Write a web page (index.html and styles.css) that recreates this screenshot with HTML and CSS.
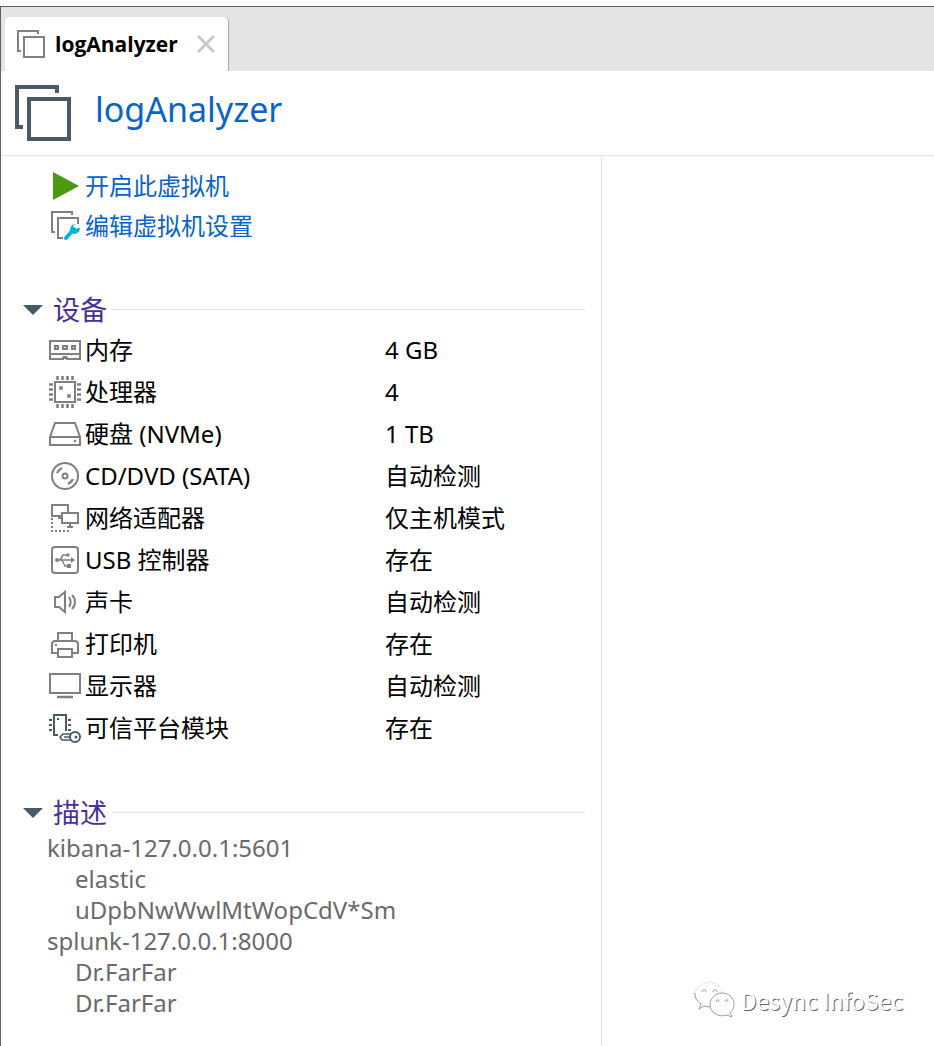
FILE: index.html
```
<!DOCTYPE html>
<html lang="zh-CN">
<head>
    <meta charset="UTF-8">
    <meta name="viewport" content="width=device-width, initial-scale=1.0">
    <title>logAnalyzer</title>
    <link rel="stylesheet" href="styles.css">
</head>
<body>
    <div class="window">
        <div class="tab-bar">
            <div class="tab">
                <svg class="tab-icon" width="28" height="28" viewBox="0 0 28 28" fill="none" stroke="#808080" stroke-width="2">
                    <path d="M21 4V1H1v20h3"/>
                    <rect x="7" y="7" width="20" height="20"/>
                </svg>
                <span class="tab-title">logAnalyzer</span>
                <button class="tab-close" aria-label="关闭">
                    <svg width="18" height="18" viewBox="0 0 18 18" fill="none" stroke="#c8c8c8" stroke-width="3">
                        <path d="M1 1l16 16M17 1L1 17"/>
                    </svg>
                </button>
            </div>
        </div>

        <header class="header">
            <svg width="56" height="56" viewBox="0 0 56 56" fill="none" stroke="#485a66" stroke-width="4">
                <path d="M42 8V2H2v40h6"/>
                <rect x="14" y="14" width="40" height="40"/>
            </svg>
            <h1>logAnalyzer</h1>
        </header>

        <div class="content">
            <main class="summary">
                <nav class="actions">
                    <a href="#" class="action">
                        <svg width="32" height="32" viewBox="0 0 32 32"><path d="M4 2l26 14L4 30z" fill="#4a990f"/></svg>
                        <span>开启此虚拟机</span>
                    </a>
                    <a href="#" class="action">
                        <svg width="32" height="32" viewBox="0 0 32 32" fill="none" stroke="#808080" stroke-width="2">
                            <path d="M23 5V2H3v20h3M29 14V8H9v20h5"/>
                            <path d="M17 28l8-9" stroke="#00b4d8" stroke-width="4" stroke-linecap="round"/>
                            <path d="M27 14l-4 1-2 4 1 4 4 1 4-2 1-4-2 0-3 2-2-2 0-2z" fill="#00b4d8" stroke="none"/>
                        </svg>
                        <span>编辑虚拟机设置</span>
                    </a>
                </nav>

                <section class="section">
                    <h2>
                        <button class="toggle" aria-expanded="true">
                            <svg width="20" height="10" viewBox="0 0 20 10"><path d="M0 0h20L10 10z" fill="#485a66"/></svg>
                            <span>设备</span>
                        </button>
                    </h2>
                    <table class="devices">
                        <tr>
                            <th scope="row"><span class="device">
                                <svg class="icon" viewBox="0 0 32 32">
                                    <path d="M1 7h30v18H1zM1 20h30"/>
                                    <path d="M6 12h3v3H6zM14 12h4v3h-4zM23 12h3v3h-3z"/>
                                    <path class="dot" d="M12 26l2-4h4l2 4z"/>
                                    <path d="M15 26h2" stroke="#fff"/>
                                </svg>内存</span></th>
                            <td>4 GB</td>
                        </tr>
                        <tr>
                            <th scope="row"><span class="device">
                                <svg class="icon" viewBox="0 0 32 32">
                                    <rect x="6" y="6" width="20" height="20"/>
                                    <path d="M8.500 0v4M13.500 0v4M18.500 0v4M23.500 0v4M8.500 28v4M13.500 28v4M18.500 28v4M23.500 28v4M0 8.500h4M0 13.500h4M0 18.500h4M0 23.500h4M28 8.500h4M28 13.500h4M28 18.500h4M28 23.500h4" stroke-width="2.600"/>
                                    <circle class="dot" cx="12" cy="12" r="2"/>
                                    <circle class="dot" cx="20" cy="20" r="2"/>
                                </svg>处理器</span></th>
                            <td>4</td>
                        </tr>
                        <tr>
                            <th scope="row"><span class="device">
                                <svg class="icon" viewBox="0 0 32 32">
                                    <path d="M1 19L6 5h20l5 14v8H1zM1 19h30"/>
                                    <circle class="dot" cx="26" cy="23" r="1.3"/>
                                </svg>硬盘 (NVMe)</span></th>
                            <td>1 TB</td>
                        </tr>
                        <tr>
                            <th scope="row"><span class="device">
                                <svg class="icon" viewBox="0 0 32 32">
                                    <circle cx="16" cy="16" r="13"/>
                                    <circle cx="16" cy="16" r="2.5"/>
                                    <path d="M8 13c1-2 3-4 5-5M24 19c-1 2-3 4-5 5" stroke-width="2.500"/>
                                </svg>CD/DVD (SATA)</span></th>
                            <td>自动检测</td>
                        </tr>
                        <tr>
                            <th scope="row"><span class="device">
                                <svg class="icon" viewBox="0 0 32 32">
                                    <path d="M12 14H3V3h16v7M9 16h4M11 14v2M13 11h16v10H13zM21 21v4M18 25h6"/>
                                    <path d="M3 16v14M6 29h16" stroke-dasharray="2 2"/>
                                </svg>网络适配器</span></th>
                            <td>仅主机模式</td>
                        </tr>
                        <tr>
                            <th scope="row"><span class="device">
                                <svg class="icon" viewBox="0 0 32 32">
                                    <rect x="3" y="3" width="26" height="26" rx="3"/>
                                    <path d="M7 16h16M11 16l3-5h4M13 16l3 6h3" stroke-width="1.5"/>
                                    <circle class="dot" cx="8" cy="16" r="2"/>
                                    <circle class="dot" cx="19" cy="11" r="1.7"/>
                                    <path class="dot" d="M22 13l4 3-4 3zM18 20h4v4h-4z"/>
                                </svg>USB 控制器</span></th>
                            <td>存在</td>
                        </tr>
                        <tr>
                            <th scope="row"><span class="device">
                                <svg class="icon" viewBox="0 0 32 32">
                                    <path d="M6 11h4l6-5v20l-6-5H6z"/>
                                    <path d="M20 11c2 3 2 7 0 10M23 9c4 4 4 10 0 14"/>
                                </svg>声卡</span></th>
                            <td>自动检测</td>
                        </tr>
                        <tr>
                            <th scope="row"><span class="device">
                                <svg class="icon" viewBox="0 0 32 32">
                                    <path d="M9 13V5h14v8M9 25H3V15l2-2h22l2 2v10h-6M9 21h14v8H9z"/>
                                    <path class="dot" d="M6 16h2v2H6z"/>
                                </svg>打印机</span></th>
                            <td>存在</td>
                        </tr>
                        <tr>
                            <th scope="row"><span class="device">
                                <svg class="icon" viewBox="0 0 32 32">
                                    <rect x="1" y="4" width="30" height="19"/>
                                    <path d="M8 27h16" stroke-width="2.500"/>
                                </svg>显示器</span></th>
                            <td>自动检测</td>
                        </tr>
                        <tr>
                            <th scope="row"><span class="device">
                                <svg class="icon icon-dark" viewBox="0 0 32 32">
                                    <path d="M9 23H5V3h12v16"/>
                                    <path d="M0 8h3M0 13h3M0 18h3M19 8h3M19 13h3M19 18h3"/>
                                    <path class="dot" d="M8 6h2v2H8z"/>
                                    <path d="M21 22h-7l-3 3 2 3h8M15 25h5" stroke-width="1.600"/>
                                    <circle cx="26" cy="25" r="5"/>
                                    <circle class="dot" cx="27" cy="25" r="1.500"/>
                                </svg>可信平台模块</span></th>
                            <td>存在</td>
                        </tr>
                    </table>
                </section>

                <section class="section">
                    <h2>
                        <button class="toggle" aria-expanded="true">
                            <svg width="20" height="10" viewBox="0 0 20 10"><path d="M0 0h20L10 10z" fill="#485a66"/></svg>
                            <span>描述</span>
                        </button>
                    </h2>
                    <div class="description">
                        <p>kibana-127.0.0.1:5601</p>
                        <p class="indent">elastic</p>
                        <p class="indent">uDpbNwWwlMtWopCdV*Sm</p>
                        <p>splunk-127.0.0.1:8000</p>
                        <p class="indent">Dr.FarFar</p>
                        <p class="indent">Dr.FarFar</p>
                    </div>
                </section>
            </main>
        </div>
    </div>

    <div class="watermark">
        <svg width="42" height="36" viewBox="0 0 42 36" fill="#fff" stroke="#777" stroke-width="0.7">
            <path d="M5 22C-2 15 0 5 9 2c9-4 19 1 20 9" stroke="#ddd"/>
            <path d="M1 11c0 5 2 8 6 11l-2 5 5-3 6 1" fill="none"/>
            <path d="M36 31l2 4-5-2C24 36 16 30 16 23c0-7 6-12 12-12 7 0 12 5 12 11 0 4-1 6-4 9z"/>
            <path d="M8 10c0-3 4-3 4 0M19 10c0-3 4-3 4 0M22 20c0-3 3-3 3 0M31 20c0-3 3-3 3 0" fill="none"/>
        </svg>
        <span>Desync InfoSec</span>
    </div>
</body>
</html>
```
FILE: styles.css
```
* {
    box-sizing: border-box;
}
body {
    margin: 0;
    padding-top: 6px;
    min-height: 100vh;
    display: flex;
    flex-direction: column;
    position: relative;
    background-color: #fff;
    color: #000;
    font-family: "Noto Sans", "Noto Sans CJK SC", sans-serif;
    font-size: 24px;
}
h1, h2, p {
    margin: 0;
    font-weight: normal;
}
button {
    border: none;
    padding: 0;
    background: none;
    font: inherit;
    color: inherit;
    cursor: pointer;
}
svg {
    display: block;
    flex: none;
}
.window {
    flex: 1;
    display: flex;
    flex-direction: column;
    border-top: 1px solid #606060;
    border-left: 1px solid #606060;
}

/* tabs */
.tab-bar {
    display: flex;
    padding: 10px 4px 0;
    background-color: #e3e4e6;
}
.tab {
    display: flex;
    align-items: center;
    height: 54px;
    padding: 0 13px 0 12px;
    border-right: 1px solid #a8a8a8;
    border-radius: 5px 5px 0 0;
    background-color: #fff;
}
.tab-title {
    margin: 0 19px 0 10px;
    font-family: "Open Sans", sans-serif;
    font-size: 21px;
    font-weight: bold;
}

/* header */
.header {
    display: flex;
    align-items: center;
    gap: 24px;
    height: 85px;
    padding: 0 14px;
    border-bottom: 1px solid #e0e0e0;
}
.header h1 {
    padding-bottom: 8px;
    font-size: 34px;
    line-height: 48px;
    color: #0a62cc;
}

/* summary */
.content {
    flex: 1;
    display: flex;
}
.summary {
    width: 601px;
    max-width: 100%;
    padding: 10px 16px 24px 22px;
    border-right: 1px solid #e0e0e0;
}
.actions {
    padding-left: 26px;
}
.action {
    display: flex;
    align-items: center;
    gap: 4px;
    height: 40px;
    color: #0a62cc;
    text-decoration: none;
}
.action span {
    padding-bottom: 3px;
}
.section {
    padding-top: 44px;
}
.section h2 {
    display: flex;
    align-items: center;
    gap: 5px;
    height: 39px;
    font-size: 27px;
    line-height: 40px;
    color: #46309c;
}
.section h2::after {
    content: "";
    flex: 1;
    height: 1px;
    background-color: #e0e0e0;
}
.toggle {
    display: flex;
    align-items: center;
    gap: 10px;
}

/* devices */
.devices {
    width: 100%;
    padding-left: 26px;
    border-spacing: 0;
    table-layout: fixed;
}
.devices th,
.devices td {
    height: 42px;
    padding: 0;
    font-weight: normal;
    line-height: 36px;
    text-align: left;
    white-space: nowrap;
}
.devices th {
    width: 336px;
}
.device {
    display: flex;
    align-items: center;
    gap: 4px;
}
.icon {
    width: 32px;
    height: 32px;
    fill: none;
    stroke: #808080;
    stroke-width: 2;
}
.icon .dot {
    fill: #808080;
    stroke: none;
}
.icon-dark {
    stroke: #485a66;
}
.icon-dark .dot {
    fill: #485a66;
}

/* description */
.description {
    padding-left: 24px;
    color: #6a6a6a;
    line-height: 31px;
}
.indent {
    padding-left: 28px;
}

.watermark {
    position: absolute;
    right: 31px;
    bottom: 28px;
    display: flex;
    align-items: center;
    gap: 5px;
    color: #fff;
    font-family: "Noto Sans CJK SC", sans-serif;
    font-size: 23px;
    line-height: 34px;
    text-shadow: 1px 1px 0 #666;
}
```
